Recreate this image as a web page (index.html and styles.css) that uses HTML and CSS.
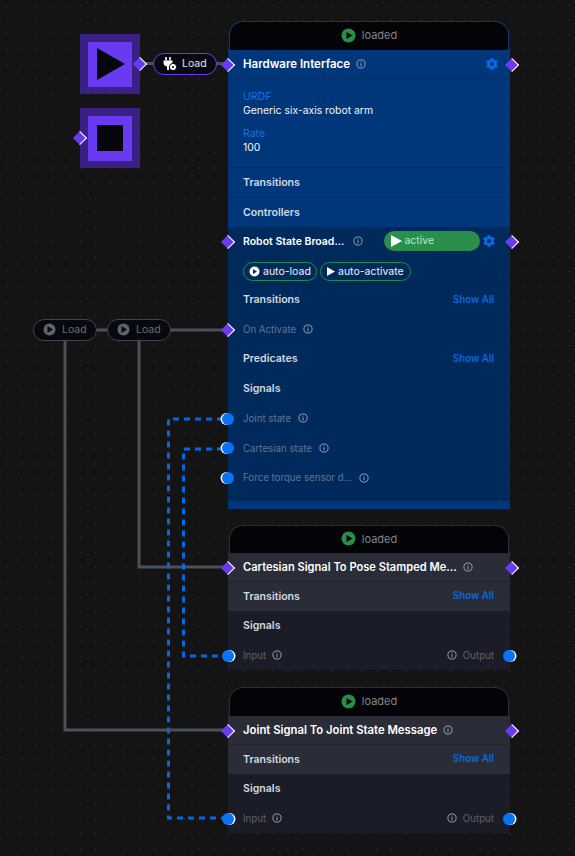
FILE: index.html
```html
<!DOCTYPE html>
<html>
<head>
    <link rel="stylesheet" href="styles.css">
</head>
<body>
    <svg class="defs" xmlns="http://www.w3.org/2000/svg">
        <symbol id="info" viewBox="0 0 10 10">
            <circle cx="5" cy="5" r="4.1" fill="none" stroke="currentColor" stroke-width="0.9"/>
            <path d="M5 4.4V7.3M5 2.7V3.5" fill="none" stroke="currentColor" stroke-width="1"/>
        </symbol>
        <symbol id="gear" viewBox="0 0 24 24">
            <path fill="currentColor" d="M19.4 13a7.5 7.5 0 0 0 0-2l2.1-1.6a.5.5 0 0 0 .1-.6l-2-3.5a.5.5 0 0 0-.6-.2l-2.5 1a7.3 7.3 0 0 0-1.7-1l-.4-2.7a.5.5 0 0 0-.5-.4h-4a.5.5 0 0 0-.5.4l-.4 2.7a7.7 7.7 0 0 0-1.7 1l-2.5-1a.5.5 0 0 0-.6.2l-2 3.5a.5.5 0 0 0 .1.6L4.6 11a7.9 7.9 0 0 0 0 2l-2.1 1.6a.5.5 0 0 0-.1.6l2 3.5c.1.2.4.3.6.2l2.5-1c.5.4 1.1.8 1.7 1l.4 2.7c0 .2.2.4.5.4h4c.3 0 .5-.2.5-.4l.4-2.7c.6-.3 1.2-.6 1.7-1l2.5 1c.2.1.5 0 .6-.2l2-3.5a.5.5 0 0 0-.1-.6zM12 15.5a3.5 3.5 0 1 1 0-7 3.5 3.5 0 0 1 0 7z"/>
        </symbol>
    </svg>

    <!-- wires sit under the nodes -->
    <svg class="wires" width="575" height="856" xmlns="http://www.w3.org/2000/svg">
        <g class="wire">
            <path d="M145 63.500H154M216 63.500H229"/>
            <path d="M96 330H108M170 330H229"/>
            <path d="M65 341V730H229"/>
            <path d="M139 341V567H229"/>
        </g>
        <g class="wire-signal">
            <path d="M223 419H168.500V818H223"/>
            <path d="M223 449H183.500V656H223"/>
        </g>
    </svg>

    <div class="block block-start">
        <div class="block-inner"><svg class="block-glyph" width="30" height="34"><polygon points="1,1 29,17 1,33"/></svg></div>
        <span class="port-d port-block-right"></span>
    </div>
    <div class="block block-stop">
        <div class="block-inner"><span class="block-square"></span></div>
        <span class="port-d port-block-left"></span>
    </div>

    <div class="pill pill-on pill-hw">
        <svg class="plug" width="14" height="14" viewBox="0 0 14 14">
            <path d="M3 0V3.500M7 0V3.500" stroke="#fff" stroke-width="1.600" fill="none"/>
            <path d="M0.500 3.500H9.500V5.500A4 4 0 0 1 6 9.500V13H4V9.500A4 4 0 0 1 0.500 5.500Z" fill="#fff"/>
            <circle cx="10" cy="10" r="3.600" fill="#fff" stroke="#08080f"/>
            <circle cx="10" cy="10" r="1.100" fill="#08080f"/>
        </svg>
        <span>Load</span>
    </div>
    <div class="pill pill-off pill-a">
        <svg width="13" height="13" viewBox="0 0 13 13"><circle cx="6.500" cy="6.500" r="6" fill="#5f6570"/><polygon points="4.500,3 10,6.500 4.500,10" fill="#08080f"/></svg>
        <span>Load</span>
    </div>
    <div class="pill pill-off pill-b">
        <svg width="13" height="13" viewBox="0 0 13 13"><circle cx="6.500" cy="6.500" r="6" fill="#5f6570"/><polygon points="4.500,3 10,6.500 4.500,10" fill="#08080f"/></svg>
        <span>Load</span>
    </div>

    <!-- Hardware interface -->
    <div class="node node-hw node-blue">
        <div class="node-head">
            <svg width="15" height="15" viewBox="0 0 15 15"><circle cx="7.500" cy="7.500" r="7" fill="#2a8c45"/><polygon points="5.500,4 11.500,7.500 5.500,11" fill="#08080f"/></svg>
            <span>loaded</span>
        </div>
        <div class="row row-title">
            <span class="port-d port-left"></span>
            <span class="title title-hw">Hardware Interface</span>
            <svg class="info"><use href="#info"/></svg>
            <svg class="gear gear-hw"><use href="#gear"/></svg>
            <span class="port-d port-right"></span>
        </div>
        <div class="props">
            <div class="prop-label">URDF</div>
            <div class="prop-value">Generic six-axis robot arm</div>
            <div class="prop-label prop-gap">Rate</div>
            <div class="prop-value">100</div>
        </div>
        <div class="row row-section row-line"><span class="section">Transitions</span></div>
        <div class="row row-section row-line"><span class="section">Controllers</span></div>

        <div class="child">
            <div class="row row-child">
                <span class="port-d port-left"></span>
                <span class="title title-child">Robot State Broad...</span>
                <svg class="info info-child"><use href="#info"/></svg>
                <div class="active">
                    <svg width="11" height="12"><polygon points="0,0 11,6 0,12" fill="#fff"/></svg>
                    <span>active</span>
                </div>
                <svg class="gear gear-child"><use href="#gear"/></svg>
                <span class="port-d port-right"></span>
            </div>
            <div class="chips">
                <div class="chip chip-load">
                    <svg width="11" height="11" viewBox="0 0 11 11"><circle cx="5.500" cy="5.500" r="5" fill="#fff"/><polygon points="4,3 8,5.500 4,8" fill="#002a5c"/></svg>
                    <span>auto-load</span>
                </div>
                <div class="chip chip-activate">
                    <svg width="8" height="9"><polygon points="0,0 8,4.500 0,9" fill="#fff"/></svg>
                    <span>auto-activate</span>
                </div>
            </div>
            <div class="row row-sub">
                <span class="section">Transitions</span>
                <span class="show-all">Show All</span>
            </div>
            <div class="row row-sub">
                <span class="port-d port-left"></span>
                <span class="port-label">On Activate</span>
                <svg class="info"><use href="#info"/></svg>
            </div>
            <div class="row row-sub">
                <span class="section">Predicates</span>
                <span class="show-all">Show All</span>
            </div>
            <div class="row row-sub"><span class="section">Signals</span></div>
            <div class="row row-sub">
                <span class="port-c port-c-in"></span>
                <span class="port-label">Joint state</span>
                <svg class="info"><use href="#info"/></svg>
            </div>
            <div class="row row-sub">
                <span class="port-c port-c-in"></span>
                <span class="port-label">Cartesian state</span>
                <svg class="info"><use href="#info"/></svg>
            </div>
            <div class="row row-sub">
                <span class="port-c port-c-in"></span>
                <span class="port-label">Force torque sensor d...</span>
                <svg class="info"><use href="#info"/></svg>
            </div>
        </div>
    </div>

    <!-- Cartesian signal -->
    <div class="node node-cart node-gray">
        <div class="node-head">
            <svg width="15" height="15" viewBox="0 0 15 15"><circle cx="7.500" cy="7.500" r="7" fill="#2a8c45"/><polygon points="5.500,4 11.500,7.500 5.500,11" fill="#08080f"/></svg>
            <span>loaded</span>
        </div>
        <div class="row row-title">
            <span class="port-d port-left"></span>
            <span class="title">Cartesian Signal To Pose Stamped Me...</span>
            <svg class="info"><use href="#info"/></svg>
            <span class="port-d port-right"></span>
        </div>
        <div class="row row-section">
            <span class="section">Transitions</span>
            <span class="show-all">Show All</span>
        </div>
        <div class="signals">
            <div class="row row-sub"><span class="section">Signals</span></div>
            <div class="row row-sub">
                <span class="port-c port-c-left"></span>
                <span class="port-label">Input</span>
                <svg class="info"><use href="#info"/></svg>
                <svg class="info info-out"><use href="#info"/></svg>
                <span class="port-label">Output</span>
                <span class="port-c port-c-right"></span>
            </div>
        </div>
    </div>

    <!-- Joint signal -->
    <div class="node node-joint node-gray">
        <div class="node-head">
            <svg width="15" height="15" viewBox="0 0 15 15"><circle cx="7.500" cy="7.500" r="7" fill="#2a8c45"/><polygon points="5.500,4 11.500,7.500 5.500,11" fill="#08080f"/></svg>
            <span>loaded</span>
        </div>
        <div class="row row-title">
            <span class="port-d port-left"></span>
            <span class="title title-joint">Joint Signal To Joint State Message</span>
            <svg class="info"><use href="#info"/></svg>
            <span class="port-d port-right"></span>
        </div>
        <div class="row row-section">
            <span class="section">Transitions</span>
            <span class="show-all">Show All</span>
        </div>
        <div class="signals">
            <div class="row row-sub"><span class="section">Signals</span></div>
            <div class="row row-sub">
                <span class="port-c port-c-left"></span>
                <span class="port-label">Input</span>
                <svg class="info"><use href="#info"/></svg>
                <svg class="info info-out"><use href="#info"/></svg>
                <span class="port-label">Output</span>
                <span class="port-c port-c-right"></span>
            </div>
        </div>
    </div>
</body>
</html>
```

FILE: styles.css
```css
* {
    box-sizing: border-box;
}

body {
    margin: 0;
    width: 575px;
    height: 856px;
    overflow: hidden;
    position: relative;
    font-family: "Inter", "Liberation Sans", sans-serif;
    font-size: 10.5px;
    color: #fff;
    background-color: #141414;
    background-image: radial-gradient(circle, #3c3c3c 0.6px, transparent 1px);
    background-size: 14.8px 14.8px;
    background-position: -0.7px -2.2px;
}

.defs {
    position: absolute;
    width: 0;
    height: 0;
}

.wires {
    position: absolute;
    left: 0;
    top: 0;
}

.wire path {
    fill: none;
    stroke: #4b505b;
    stroke-width: 3;
}

.wire-signal path {
    fill: none;
    stroke: #0068e6;
    stroke-width: 3;
    stroke-dasharray: 6 5;
}

/* start / stop blocks */
.block {
    position: absolute;
    left: 80px;
    width: 60px;
    height: 60px;
    background: #3a2085;
    display: flex;
    align-items: center;
    justify-content: center;
}

.block-start {
    top: 34px;
}

.block-stop {
    top: 108px;
}

.block-inner {
    width: 44px;
    height: 45px;
    background: #6a3af0;
    display: flex;
    align-items: center;
    justify-content: center;
}

.block-glyph {
    margin-left: 2px;
}

.block-glyph polygon {
    fill: #06060c;
}

.block-square {
    width: 26px;
    height: 26px;
    background: #06060c;
}

.port-block-right {
    left: 55px;
    top: 25px;
}

.port-block-left {
    left: -5px;
    top: 25px;
}

/* load pills */
.pill {
    position: absolute;
    width: 64px;
    height: 22px;
    border-radius: 11px;
    background: #08080f;
    display: flex;
    align-items: center;
    gap: 5px;
    padding-left: 9px;
    padding-bottom: 1px;
    font-size: 10.5px;
}

.pill-on {
    border: 1.5px solid #6a3af0;
    color: #e4e4ea;
}

.pill-off {
    border: 1.5px solid #3f4450;
    color: #666c76;
    gap: 6px;
}

.pill-hw {
    left: 153px;
    top: 53px;
}

.pill-a {
    left: 33px;
    top: 319px;
}

.pill-b {
    left: 107px;
    top: 319px;
}

/* nodes */
.node {
    position: absolute;
    left: 228px;
    width: 282px;
}

.node-hw {
    top: 21px;
    height: 488px;
}

.node-cart {
    top: 525px;
    height: 146px;
}

.node-joint {
    top: 687px;
    height: 147px;
}

.node-blue {
    background: linear-gradient(transparent 0 29px, #00377a 29px);
}

.node-head {
    height: 29px;
    margin: 0 1px;
    border: 1px solid #2a2c3c;
    border-bottom: 0;
    border-radius: 14px 14px 0 0;
    background: #030308;
    display: flex;
    align-items: center;
    justify-content: center;
    gap: 6px;
    color: #83858d;
    font-size: 11px;
    position: relative;
    padding-bottom: 2px;
}

.node-cart .node-head {
    height: 28px;
}

.node-blue .node-head {
    border-color: #0a3a78;
}

.row {
    position: relative;
    display: flex;
    align-items: center;
    padding: 0 16px 0 15px;
}

.row-title {
    height: 29px;
    background: #2a2c38;
    border-bottom: 1px solid #20222c;
    padding-bottom: 1px;
}

.node-blue .row-title {
    background: #00377a;
    border-bottom-color: #002f69;
}

.row-section {
    height: 29px;
    background: #2a2c38;
    justify-content: space-between;
    padding-bottom: 1px;
}

.node-blue .row-section {
    height: 30px;
    background: #00377a;
}

.row-line {
    border-top: 1px solid #002c62;
}

.title {
    font-weight: 600;
    font-size: 11.100px;
    white-space: nowrap;
}

.title-hw {
    font-size: 11.500px;
}

.title-joint {
    font-size: 11.300px;
}

.title-child {
    font-size: 10.500px;
}

.section {
    font-weight: 600;
    font-size: 10.600px;
    color: #d3d8e2;
}

.show-all {
    font-weight: 600;
    font-size: 9.800px;
    color: #0a66e0;
    margin-top: -1px;
}

.port-label {
    font-size: 9.700px;
    color: #64748f;
}

.port-label:last-of-type {
    margin-right: 1px;
}

.node-gray .port-label {
    color: #5f616a;
}

.info {
    width: 10px;
    height: 10px;
    margin-left: 6px;
    color: #a3a9b5;
    flex-shrink: 0;
}

.info-out {
    margin-left: auto;
    margin-right: 6px;
}

.info-child {
    margin-left: 9px;
}

.gear {
    width: 14px;
    height: 14px;
    color: #0a6bea;
    flex-shrink: 0;
}

.gear-hw {
    margin-left: auto;
    margin-right: -5px;
}

.gear-child {
    margin-left: 2px;
    margin-right: -1px;
}

.props {
    height: 88px;
    padding: 11px 15px 0;
    background: #00377a;
}

.prop-label {
    color: #1c6fe0;
    font-size: 10.500px;
    line-height: 14px;
}

.prop-value {
    color: #f2f4f8;
    font-size: 10.400px;
    line-height: 14px;
}

.prop-gap {
    margin-top: 9px;
}

.child {
    height: 274px;
    background: #002a5c;
}

.row-child {
    height: 29px;
    padding-bottom: 1px;
}

.active {
    margin-left: 21px;
    width: 96px;
    height: 20px;
    border-radius: 10px;
    background: #2a8f4a;
    color: #bfe6cb;
    font-size: 10.500px;
    display: flex;
    align-items: center;
    gap: 2px;
    padding-left: 7px;
    padding-bottom: 1px;
    flex-shrink: 0;
}

.chips {
    height: 29px;
    padding: 6px 15px 0;
    display: flex;
    gap: 3px;
    border-bottom: 1px solid #00244f;
}

.chip {
    height: 19px;
    border: 1px solid #1f8a4f;
    border-radius: 10px;
    display: flex;
    align-items: center;
    gap: 3px;
    font-size: 10.500px;
    color: #eef2f6;
}

.chip-load {
    width: 74px;
    padding-left: 5px;
}

.chip-activate {
    width: 91px;
    padding-left: 6px;
}

.row-sub {
    height: 29.700px;
    justify-content: flex-start;
    padding-bottom: 0.500px;
}

.row-sub .show-all {
    margin-left: auto;
}

.signals {
    background: #1a1d27;
}

/* ports */
.port-d {
    position: absolute;
    width: 10px;
    height: 10px;
    background: #6a3af0;
    border-top: 1.500px solid #fff;
    border-right: 1.500px solid #fff;
    transform: rotate(45deg);
}

.port-left {
    left: -5px;
    top: calc(50% - 4.500px);
}

.port-right {
    right: -7px;
    top: calc(50% - 4.500px);
}

.port-c {
    position: absolute;
    width: 12px;
    height: 12px;
    border-radius: 50%;
    background: #0a72f5;
    top: calc(50% - 6px);
}

.port-c-in {
    left: -6px;
    box-shadow: -1.500px 0 0 #fff;
}

.port-c-left {
    left: -6px;
    box-shadow: 1.500px 0 0 #fff;
}

.port-c-right {
    right: -5px;
    box-shadow: 1.500px 0 0 #fff;
}
```
